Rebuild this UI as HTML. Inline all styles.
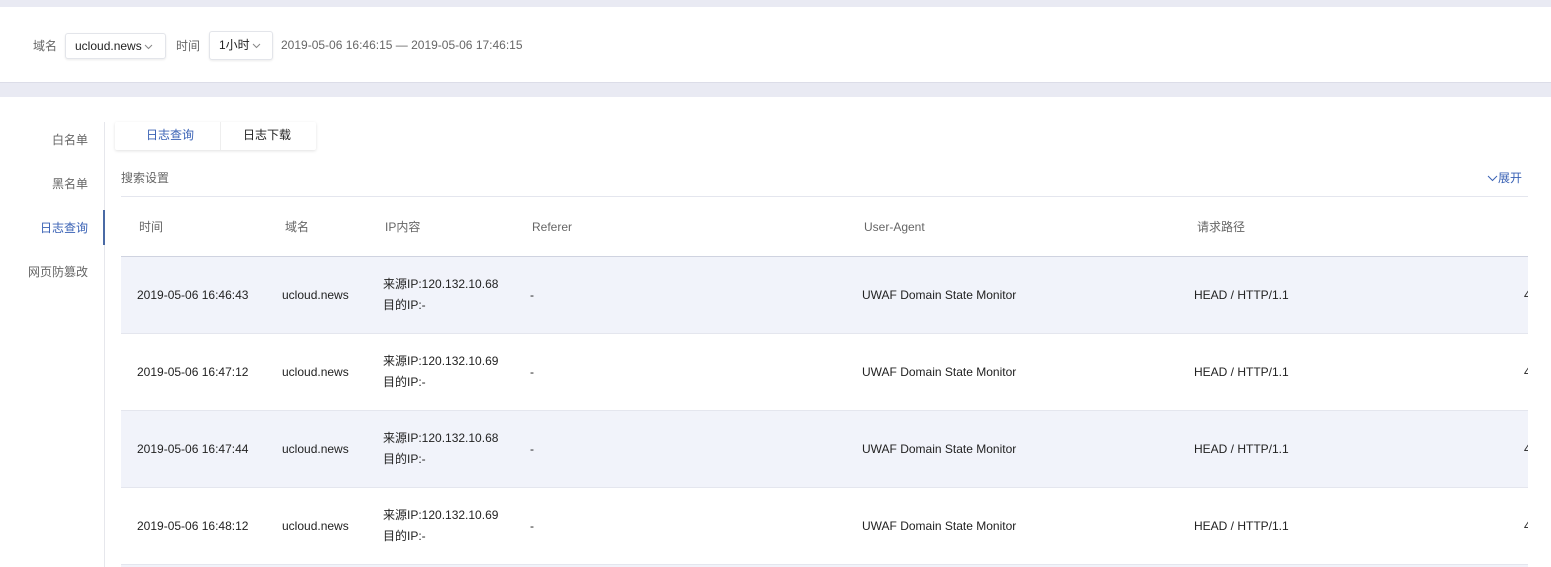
<!DOCTYPE html>
<html style="width:1551px;height:567px;overflow:hidden"><head><meta charset="utf-8"><style>
*{margin:0;padding:0;box-sizing:border-box}
body{width:1551px;height:567px;overflow:hidden;background:#fff;font-family:"Liberation Sans","Noto Sans CJK SC",sans-serif;font-size:12px;color:#333;position:relative}
.abs{position:absolute;white-space:nowrap}
.g{color:#666}
.sel{position:absolute;height:26px;border:1px solid #e3e5ea;border-radius:3px;box-shadow:0 1px 2px rgba(0,0,0,.08);background:#fff;line-height:24px;padding-left:9px;color:#222}
.row{position:absolute;left:121px;width:1407px;height:77px;border-bottom:1px solid #e4e6ee;overflow:hidden}
.row.o{background:#f1f3fa}
.c{position:absolute;top:0;line-height:77px;color:#222;white-space:nowrap}
.ip{position:absolute;top:17px;line-height:21px;color:#222;white-space:nowrap}
.chev{display:inline-block;vertical-align:middle;margin-left:2px}
</style></head><body>
<div class="abs" style="left:0;top:0;width:1551px;height:7px;background:#e9eaf3"></div>
<div class="abs" style="left:0;top:82px;width:1551px;height:15px;background:#e9eaf3;border-top:1px solid #dcdde8"></div>
<div class="abs g" style="left:33px;top:37px">域名</div>
<div class="sel" style="left:65px;top:33px;width:101px">ucloud.news<svg class="chev" width="9" height="6" viewBox="0 0 9 6"><path d="M1 1l3.5 3.5L8 1" fill="none" stroke="#888" stroke-width="1"/></svg></div>
<div class="abs g" style="left:176px;top:37px">时间</div>
<div class="sel" style="left:209px;top:31px;width:64px;height:29px;line-height:27px">1小时<svg class="chev" width="9" height="6" viewBox="0 0 9 6"><path d="M1 1l3.5 3.5L8 1" fill="none" stroke="#888" stroke-width="1"/></svg></div>
<div class="abs g" style="left:281px;top:38px">2019-05-06 16:46:15 — 2019-05-06 17:46:15</div>

<div class="abs" style="left:104px;top:122px;width:1px;height:445px;background:#e6e7ec"></div>
<div class="abs" style="left:103px;top:210px;width:2px;height:35px;background:#4a6aa5"></div>
<div class="abs g" style="left:52px;top:131px">白名单</div>
<div class="abs g" style="left:52px;top:175px">黑名单</div>
<div class="abs" style="left:40px;top:219px;color:#3a62b5">日志查询</div>
<div class="abs g" style="left:28px;top:263px">网页防篡改</div>

<div class="abs" style="left:115px;top:122px;width:201px;height:28px;background:#fff;box-shadow:0 1px 3px rgba(0,0,0,.12);border-radius:2px"></div>
<div class="abs" style="left:220px;top:122px;width:1px;height:28px;background:#eee"></div>
<div class="abs" style="left:146px;top:126px;color:#3a62b5">日志查询</div>
<div class="abs" style="left:243px;top:126px;color:#222">日志下载</div>

<div class="abs g" style="left:121px;top:169px">搜索设置</div>
<div class="abs" style="left:1487px;top:169px;color:#3a62b5"><svg width="11" height="7" viewBox="0 0 11 7" style="vertical-align:middle"><path d="M1 1l4.5 4.5L10 1" fill="none" stroke="#3a62b5" stroke-width="1"/></svg>展开</div>
<div class="abs" style="left:121px;top:196px;width:1407px;height:1px;background:#e4e6ee"></div>

<div class="abs g" style="left:139px;top:218px">时间</div>
<div class="abs g" style="left:285px;top:218px">域名</div>
<div class="abs g" style="left:385px;top:218px">IP内容</div>
<div class="abs g" style="left:532px;top:220px">Referer</div>
<div class="abs g" style="left:864px;top:220px">User-Agent</div>
<div class="abs g" style="left:1197px;top:218px">请求路径</div>
<div class="abs" style="left:121px;top:256px;width:1407px;height:1px;background:#cfd3e0"></div>

<div class="row o" style="top:257px"><div class="c" style="left:16px">2019-05-06 16:46:43</div><div class="c" style="left:161px">ucloud.news</div><div class="ip" style="left:262px">来源IP:120.132.10.68<br>目的IP:-</div><div class="c" style="left:409px">-</div><div class="c" style="left:741px">UWAF Domain State Monitor</div><div class="c" style="left:1073px">HEAD / HTTP/1.1</div><div class="c" style="left:1403px">4</div></div>
<div class="row" style="top:334px"><div class="c" style="left:16px">2019-05-06 16:47:12</div><div class="c" style="left:161px">ucloud.news</div><div class="ip" style="left:262px">来源IP:120.132.10.69<br>目的IP:-</div><div class="c" style="left:409px">-</div><div class="c" style="left:741px">UWAF Domain State Monitor</div><div class="c" style="left:1073px">HEAD / HTTP/1.1</div><div class="c" style="left:1403px">4</div></div>
<div class="row o" style="top:411px"><div class="c" style="left:16px">2019-05-06 16:47:44</div><div class="c" style="left:161px">ucloud.news</div><div class="ip" style="left:262px">来源IP:120.132.10.68<br>目的IP:-</div><div class="c" style="left:409px">-</div><div class="c" style="left:741px">UWAF Domain State Monitor</div><div class="c" style="left:1073px">HEAD / HTTP/1.1</div><div class="c" style="left:1403px">4</div></div>
<div class="row" style="top:488px"><div class="c" style="left:16px">2019-05-06 16:48:12</div><div class="c" style="left:161px">ucloud.news</div><div class="ip" style="left:262px">来源IP:120.132.10.69<br>目的IP:-</div><div class="c" style="left:409px">-</div><div class="c" style="left:741px">UWAF Domain State Monitor</div><div class="c" style="left:1073px">HEAD / HTTP/1.1</div><div class="c" style="left:1403px">4</div></div>
<div class="abs" style="left:121px;top:565px;width:1407px;height:2px;background:#f1f3fa"></div>
</body></html>
